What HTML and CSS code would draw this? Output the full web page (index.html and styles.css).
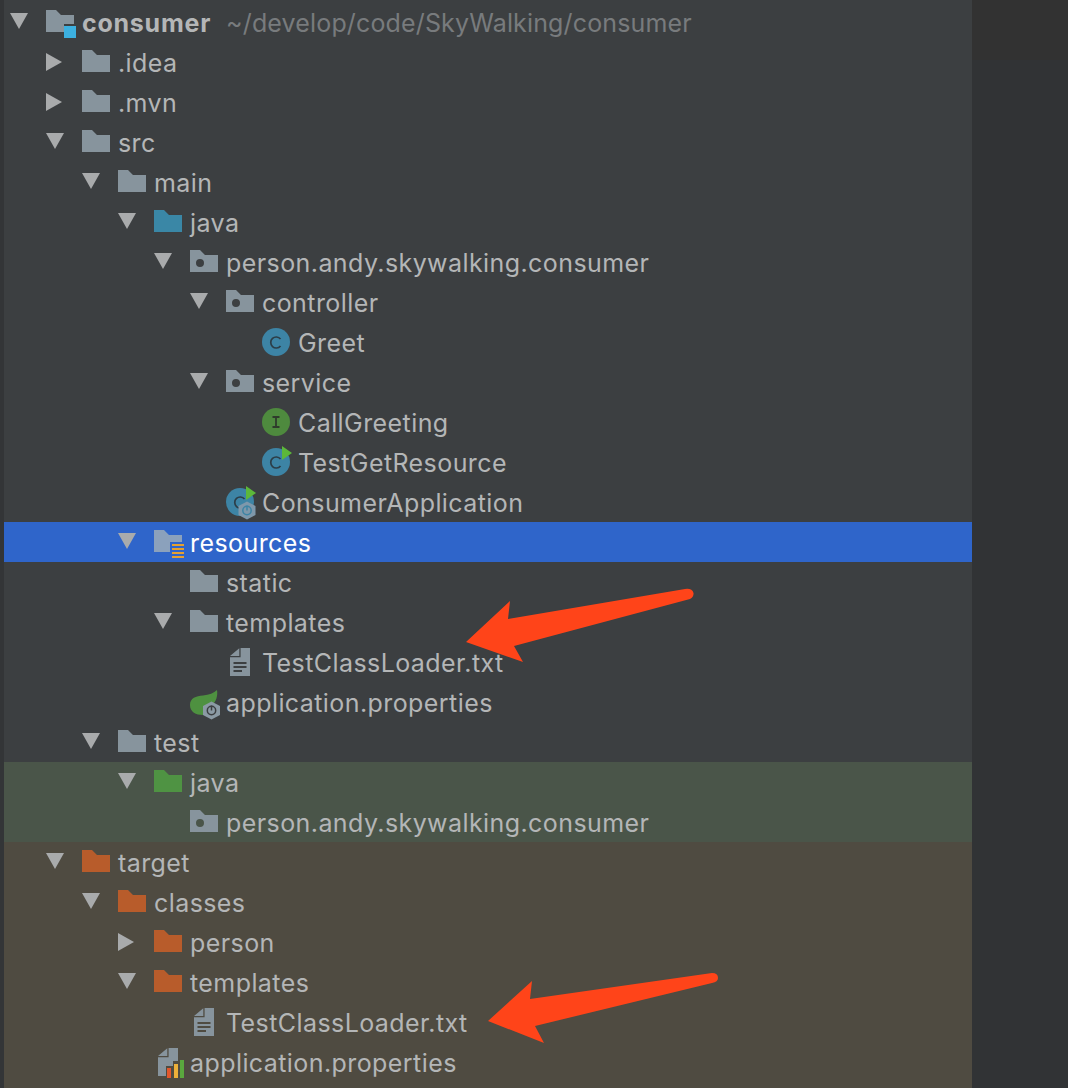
FILE: index.html
```html
<!DOCTYPE html>
<html lang="en">
<head>
<meta charset="utf-8">
<title>Project tree</title>
<link rel="stylesheet" href="styles.css">
</head>
<body>
<svg class="defs" width="0" height="0" aria-hidden="true">
  <defs>
    <symbol id="open" viewBox="0 0 18 16"><path d="M0 0H18L9 16Z"/></symbol>
    <symbol id="closed" viewBox="0 0 16 18"><path d="M0 0L16 9L0 18Z"/></symbol>
    <symbol id="folder" viewBox="0 0 36 40"><path d="M0 8H10L15 13H28V30H0Z"/></symbol>
    <symbol id="package" viewBox="0 0 36 40"><path fill-rule="evenodd" d="M0 8H10L15 13H28V30H0ZM6 21a4 4 0 1 0 8 0a4 4 0 1 0 -8 0Z"/></symbol>
    <symbol id="module" viewBox="0 0 36 40">
      <path fill="#87949d" d="M0 8H10L15 13H28V22H18V30H0Z"/>
      <rect x="18" y="24" width="12" height="12" fill="#3cb0e0"/>
    </symbol>
    <symbol id="res" viewBox="0 0 36 40">
      <path fill="#8ba1bc" d="M0 8H10L15 13H28V20H16V30H0Z"/>
      <path fill="#e6a02e" d="M18 22H30V24H18ZM18 26H30V28H18ZM18 30H30V32H18ZM18 34H30V36H18Z"/>
    </symbol>
    <symbol id="cls" viewBox="0 0 36 40">
      <circle cx="14" cy="20" r="14" fill="#3d84a5"/>
      <path d="M18.500 17a5.500 5.500 0 1 0 0 7" fill="none" stroke="#2c3e48" stroke-width="1.700"/>
    </symbol>
    <symbol id="iface" viewBox="0 0 36 40">
      <circle cx="14" cy="20" r="14" fill="#4e8a3e"/>
      <path d="M10.500 15H17.500M14 15V25M10.500 25H17.500" fill="none" stroke="#2f3b2c" stroke-width="1.800"/>
    </symbol>
    <symbol id="run" viewBox="0 0 36 40">
      <circle cx="14" cy="20" r="14" fill="#3d84a5"/>
      <path d="M18.500 17a5.500 5.500 0 1 0 0 7" fill="none" stroke="#2c3e48" stroke-width="1.700"/>
      <path d="M20 4L30 11L20 18Z" fill="#5cb83a"/>
    </symbol>
    <symbol id="boot" viewBox="0 0 36 40">
      <circle cx="14" cy="20" r="14" fill="#3d84a5"/>
      <path d="M18.500 17a5.500 5.500 0 1 0 0 7" fill="none" stroke="#2c3e48" stroke-width="1.700"/>
      <path d="M20 4L30 11L20 18Z" fill="#5cb83a"/>
      <path d="M21 19.500L29.500 24V33L21 37.500L12.500 33V24Z" fill="#7e98ab"/>
      <circle cx="21" cy="28.500" r="4.200" fill="none" stroke="#3d84a5" stroke-width="1.500"/>
      <path d="M21 23.500V28.500" stroke="#3d84a5" stroke-width="1.500"/>
    </symbol>
    <symbol id="file" viewBox="0 0 36 40">
      <path fill="#87949d" d="M0 14L9.300 6.300V14ZM10.600 6H20V34H0V15.300H10.600Z"/>
      <path stroke="#3c3f41" stroke-width="2" d="M3.500 21H16.500M3.500 25H16.500M3.500 29H12"/>
    </symbol>
    <symbol id="file-target" viewBox="0 0 36 40">
      <path fill="#87949d" d="M0 14L9.300 6.300V14ZM10.600 6H20V34H0V15.300H10.600Z"/>
      <path stroke="#4f4b41" stroke-width="2" d="M3.500 21H16.500M3.500 25H16.500M3.500 29H12"/>
    </symbol>
    <symbol id="spring" viewBox="0 0 36 40">
      <path fill="#4e9140" d="M0 23C0 16 6 14 13 13.500C19 13 24 11 27 8C28 14 26 20 22 23L13 33C6 33 0 30 0 23Z"/>
      <path fill="#8b9aa4" d="M21.500 19.500L30 24V33L21.500 37.500L13 33V24Z"/>
      <circle cx="21.500" cy="28.500" r="4.200" fill="none" stroke="#3c3f41" stroke-width="1.500"/>
      <path d="M21.500 23.500V28.500" stroke="#3c3f41" stroke-width="1.500"/>
    </symbol>
    <symbol id="propsfile" viewBox="0 0 36 40">
      <path fill="#87949d" d="M0 14L9.300 6.300V14ZM10.600 6H20V19H15V24H8V34H0V15.300H10.600Z"/>
      <rect x="9" y="26" width="4" height="10" fill="#e2572c"/>
      <rect x="16" y="22" width="4" height="14" fill="#edb03a"/>
      <rect x="22" y="18" width="4" height="18" fill="#5aa83e"/>
    </symbol>
  </defs>
</svg>

<div class="app">
  <div class="gutter"></div>
  <main class="tree">
    <div class="row d0"><span class="twist"><svg class="tw-open"><use href="#open"/></svg></span><svg class="icon"><use href="#module"/></svg><span class="label bold">consumer</span><span class="label path">~/develop/code/SkyWalking/consumer</span></div>
    <div class="row d1"><span class="twist"><svg class="tw-closed"><use href="#closed"/></svg></span><svg class="icon grey"><use href="#folder"/></svg><span class="label">.idea</span></div>
    <div class="row d1"><span class="twist"><svg class="tw-closed"><use href="#closed"/></svg></span><svg class="icon grey"><use href="#folder"/></svg><span class="label">.mvn</span></div>
    <div class="row d1"><span class="twist"><svg class="tw-open"><use href="#open"/></svg></span><svg class="icon grey"><use href="#folder"/></svg><span class="label">src</span></div>
    <div class="row d2"><span class="twist"><svg class="tw-open"><use href="#open"/></svg></span><svg class="icon grey"><use href="#folder"/></svg><span class="label">main</span></div>
    <div class="row d3"><span class="twist"><svg class="tw-open"><use href="#open"/></svg></span><svg class="icon blue"><use href="#folder"/></svg><span class="label">java</span></div>
    <div class="row d4"><span class="twist"><svg class="tw-open"><use href="#open"/></svg></span><svg class="icon grey"><use href="#package"/></svg><span class="label">person.andy.skywalking.consumer</span></div>
    <div class="row d5"><span class="twist"><svg class="tw-open"><use href="#open"/></svg></span><svg class="icon grey"><use href="#package"/></svg><span class="label">controller</span></div>
    <div class="row d6"><span class="twist"></span><svg class="icon"><use href="#cls"/></svg><span class="label">Greet</span></div>
    <div class="row d5"><span class="twist"><svg class="tw-open"><use href="#open"/></svg></span><svg class="icon grey"><use href="#package"/></svg><span class="label">service</span></div>
    <div class="row d6"><span class="twist"></span><svg class="icon"><use href="#iface"/></svg><span class="label">CallGreeting</span></div>
    <div class="row d6"><span class="twist"></span><svg class="icon"><use href="#run"/></svg><span class="label">TestGetResource</span></div>
    <div class="row d5"><span class="twist"></span><svg class="icon"><use href="#boot"/></svg><span class="label">ConsumerApplication</span></div>
    <div class="row d3 selected"><span class="twist"><svg class="tw-open"><use href="#open"/></svg></span><svg class="icon"><use href="#res"/></svg><span class="label">resources</span></div>
    <div class="row d4"><span class="twist"></span><svg class="icon grey"><use href="#folder"/></svg><span class="label">static</span></div>
    <div class="row d4"><span class="twist"><svg class="tw-open"><use href="#open"/></svg></span><svg class="icon grey"><use href="#folder"/></svg><span class="label">templates</span></div>
    <div class="row d5"><span class="twist"></span><svg class="icon file-shift"><use href="#file"/></svg><span class="label">TestClassLoader.txt</span></div>
    <div class="row d4"><span class="twist"></span><svg class="icon"><use href="#spring"/></svg><span class="label">application.properties</span></div>
    <div class="row d2"><span class="twist"><svg class="tw-open"><use href="#open"/></svg></span><svg class="icon grey"><use href="#folder"/></svg><span class="label">test</span></div>
    <section class="group-test">
      <div class="row d3"><span class="twist"><svg class="tw-open"><use href="#open"/></svg></span><svg class="icon green"><use href="#folder"/></svg><span class="label">java</span></div>
      <div class="row d4"><span class="twist"></span><svg class="icon grey"><use href="#package"/></svg><span class="label">person.andy.skywalking.consumer</span></div>
    </section>
    <section class="group-target">
      <div class="row d1"><span class="twist"><svg class="tw-open"><use href="#open"/></svg></span><svg class="icon orange"><use href="#folder"/></svg><span class="label">target</span></div>
      <div class="row d2"><span class="twist"><svg class="tw-open"><use href="#open"/></svg></span><svg class="icon orange"><use href="#folder"/></svg><span class="label">classes</span></div>
      <div class="row d3"><span class="twist"><svg class="tw-closed"><use href="#closed"/></svg></span><svg class="icon orange"><use href="#folder"/></svg><span class="label">person</span></div>
      <div class="row d3"><span class="twist"><svg class="tw-open"><use href="#open"/></svg></span><svg class="icon orange"><use href="#folder"/></svg><span class="label">templates</span></div>
      <div class="row d4"><span class="twist"></span><svg class="icon file-shift"><use href="#file-target"/></svg><span class="label">TestClassLoader.txt</span></div>
      <div class="row d3"><span class="twist"></span><svg class="icon file-shift"><use href="#propsfile"/></svg><span class="label">application.properties</span></div>
    </section>
  </main>
  <aside class="side"><div class="side-top"></div></aside>
</div>

<svg class="annotations" viewBox="0 0 1068 1088" aria-hidden="true">
  <path d="M466 642L510 601L508 619L685 589Q692 588 693.500 593Q694 597 690 599L514 646L523 662Z"/>
  <path d="M488 1021L532 981L530 999L712 973Q718 973 718 978Q718 982 712 983L535 1026L544 1043Z"/>
</svg>
</body>
</html>
```
FILE: styles.css
```css
* { box-sizing: border-box; }
html, body { margin: 0; padding: 0; }
body {
  width: 1068px;
  height: 1088px;
  overflow: hidden;
  position: relative;
  background: #313335;
  font-family: Inter, "Noto Sans", sans-serif;
  font-size: 25px;
  color: #b4b6b7;
}
.defs { position: absolute; }
.app { display: flex; height: 1088px; }
.gutter { width: 4px; background: #333537; flex: none; }
.tree {
  width: 968px;
  flex: none;
  display: flex;
  flex-direction: column;
  padding-top: 2px;
  background: #3c3f41;
}
.side { flex: 1; background: #313335; }
.side-top { height: 60px; background: #323232; }
.row { height: 40px; flex: none; display: flex; align-items: center; }
.d0 { padding-left: 6px; }
.d1 { padding-left: 42px; }
.d2 { padding-left: 78px; }
.d3 { padding-left: 114px; }
.d4 { padding-left: 150px; }
.d5 { padding-left: 186px; }
.d6 { padding-left: 222px; }
.twist { width: 36px; height: 40px; flex: none; display: flex; align-items: center; fill: #a9abac; }
.tw-open { width: 18px; height: 16px; margin-top: -2px; }
.tw-closed { width: 16px; height: 18px; }
.icon { width: 36px; height: 40px; flex: none; }
.file-shift { margin-left: 4px; margin-right: -4px; }
.grey { fill: #87949d; }
.blue { fill: #3a87a6; }
.green { fill: #4f9343; }
.orange { fill: #b85c2b; }
.label { white-space: nowrap; letter-spacing: 0.42px; padding-top: 2px; }
.label.bold { font-weight: 700; letter-spacing: 0.75px; }
.label.path { margin-left: 15px; color: #787b7d; letter-spacing: 0.15px; }
.selected { background: #2f65ca; }
.selected .label { color: #fff; }
.group-test { background: #4a5549; }
.group-target { flex: 1; background: #4f4b41; }
.annotations { position: absolute; left: 0; top: 0; width: 1068px; height: 1088px; fill: #ff4419; pointer-events: none; }
```
